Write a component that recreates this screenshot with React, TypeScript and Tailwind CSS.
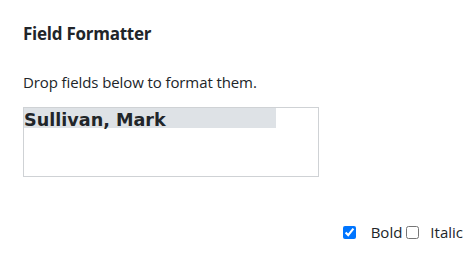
import React from "react";

export default function App() {
  return (
    <div className="w-[474px] h-[255px] bg-white text-[#212529] relative" style={{ fontFamily: '"Open Sans", "Noto Sans", sans-serif' }}>
      <div className="pl-[23px] pt-[22px]">
        <h1 className="text-[17px] leading-[24px] font-bold tracking-[-0.25px]">Field Formatter</h1>
        <p className="mt-[25px] text-[15px] leading-[22px] tracking-[-0.1px]">Drop fields below to format them.</p>
        <div className="mt-[14px] w-[296px] h-[70px] border border-[#cfd2d5]">
          <div className="w-[252px] h-[20px] bg-[#dee2e6] text-[17.6px] leading-[24px] font-bold whitespace-nowrap" style={{ fontFamily: '"DejaVu Sans", Verdana, sans-serif' }}>
            Sullivan, Mark
          </div>
        </div>
      </div>
      <div className="mt-[45px] flex items-center justify-end pr-[11px] text-[15px] leading-[20px]">
        <input type="checkbox" defaultChecked className="w-[13px] h-[13px] m-0" />
        <span className="ml-[15px]">Bold</span>
        <input type="checkbox" className="w-[13px] h-[13px] ml-[4px]" />
        <span className="ml-[11px]">Italic</span>
      </div>
    </div>
  );
}
